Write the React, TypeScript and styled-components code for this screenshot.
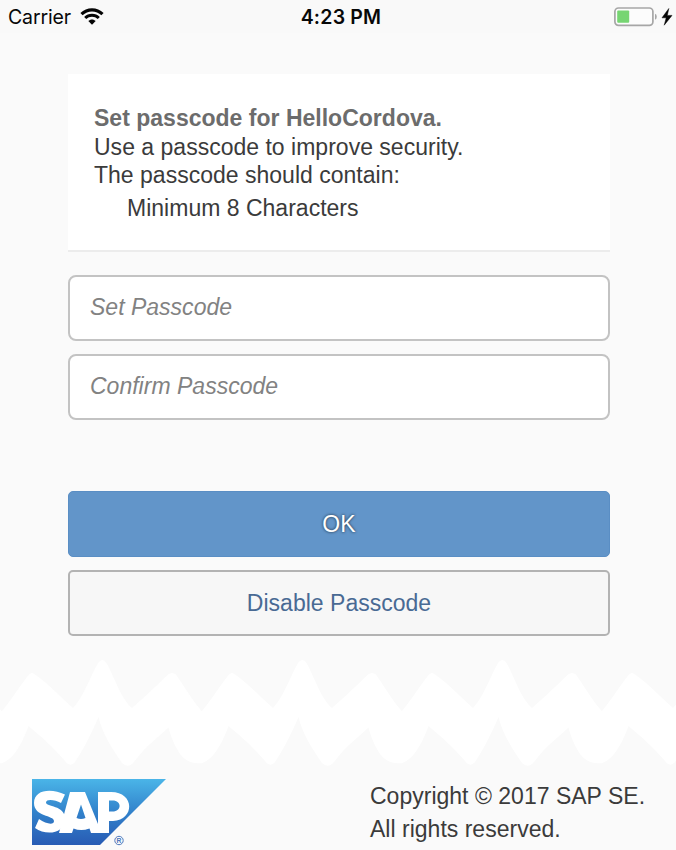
import React from "react";
import styled, { createGlobalStyle, css } from "styled-components";

const GlobalStyle = createGlobalStyle`
  * { box-sizing: border-box; }
  body { margin: 0; background: #fafafa; overflow: hidden; }
`;

const Screen = styled.div`
  width: 676px;
  height: 850px;
  overflow: hidden;
  display: flex;
  flex-direction: column;
  background: #fafafa;
  color: #3b3b3b;
  font-family: "Liberation Sans", Arial, sans-serif;
  font-size: 23px;
  letter-spacing: 0.01px;
`;

const StatusBar = styled.header`
  display: grid;
  grid-template-columns: 1fr auto 1fr;
  align-items: center;
  height: 33px;
  padding: 1px 2px 0 8px;
  background: #f9f9f9;
  color: #080808;
  font-family: Inter, sans-serif;
  font-size: 19.5px;
  letter-spacing: 0;
`;

const Carrier = styled.div`
  display: flex;
  align-items: center;
  gap: 9px;
  letter-spacing: -0.12px;
`;

const Clock = styled.time`
  font-weight: 600;
  letter-spacing: 0.2px;
`;

const Power = styled.div`
  display: flex;
  justify-content: flex-end;
`;

const Content = styled.main`
  width: 542px;
  margin: 41px 0 0 68px;
  display: flex;
  flex-direction: column;
`;

const Card = styled.section`
  height: 178px;
  padding: 30px 26px 0;
  background: #fff;
  border-bottom: 2px solid #ececec;
  line-height: 28px;
`;

const Title = styled.h1`
  margin: 0;
  font-size: 23px;
  line-height: 29px;
  font-weight: 700;
  color: #6c6c6c;
`;

const Line = styled.p`
  margin: 0;
`;

const Rules = styled.ul`
  margin: 5px 0 0;
  padding: 0 0 0 33px;
  list-style: none;
`;

const Fields = styled.form`
  display: flex;
  flex-direction: column;
  gap: 13px;
  margin-top: 23px;
`;

const Field = styled.input`
  height: 66px;
  width: 100%;
  padding: 0 20px 2px;
  border: 2px solid #c3c3c3;
  border-radius: 8px;
  background: #fff;
  font: inherit;
  font-style: italic;
  letter-spacing: inherit;
  outline: none;
  &::placeholder {
    color: #828282;
    opacity: 1;
  }
`;

const Actions = styled.div`
  display: flex;
  flex-direction: column;
  gap: 13px;
  margin-top: 71px;
`;

const Button = styled.button<{ $primary?: boolean }>`
  height: 66px;
  width: 100%;
  padding: 1px 0 0;
  border-radius: 5px;
  font: inherit;
  letter-spacing: inherit;
  ${({ $primary }) =>
    $primary
      ? css`
          border: 1px solid #5a8ec4;
          background: #6295c9;
          color: #fff;
          text-shadow: 0 0 3px rgba(0, 0, 0, 0.75);
        `
      : css`
          border: 2px solid #b3b3b3;
          background: #f7f7f7;
          color: #496a94;
        `}
`;

const Tear = styled.svg`
  display: block;
  flex: none;
  width: 676px;
  height: 110px;
  margin-top: 23px;
`;

const Footer = styled.footer`
  display: flex;
  justify-content: space-between;
  align-items: flex-start;
  padding: 10px 30px 0 32px;
`;

const Copyright = styled.div`
  width: 276px;
  padding-top: 1px;
  line-height: 33px;
  white-space: nowrap;
`;

const Logo = styled.svg`
  display: block;
  width: 134px;
  height: 70px;
`;

const WifiIcon = () => (
  <svg width="24" height="18" viewBox="0 0 24 18" fill="none" stroke="#050505">
    <path d="M1.5 6.2C7.4.5 16.6.5 22.5 6.2" strokeWidth="3.2" />
    <path d="M5.2 10C9 6.3 15 6.3 18.8 10" strokeWidth="3" />
    <path d="M8.3 13.1C10.4 11 13.6 11 15.7 13.1L12 16.8Z" fill="#050505" stroke="none" />
  </svg>
);

const BatteryIcon = () => (
  <svg width="60" height="22" viewBox="0 0 60 22">
    <rect x="0.9" y="2" width="38" height="17.4" rx="3.6" fill="#fcfcfc" stroke="#a6a6a6" strokeWidth="1.7" />
    <rect x="3.2" y="4.5" width="12" height="12.2" rx="1" fill="#76d572" />
    <path d="M41 7.8Q42.8 8.5 42.8 10.8T41 13.8Z" fill="#a6a6a6" />
    <path d="M54.8 2.5L48 11.8h4.2L50.200 19.2 58 9.400H53.300Z" fill="#050505" stroke="#050505" strokeWidth=".5" />
  </svg>
);

/* One 200px unit of the torn strip, repeated across the page width. */
const TearUnit = () => (
  <path
    fill="#fff"
    d="M2 52C10 43 21 25 29 15.500Q32 12.500 35 15.500C50 26 60 38 73 49C84 37 90 18 98 4Q102.500 -2 106.500 4C114 17 121 40 132 49C146 37 156 27 168 15.500Q172 12.500 176 15.500C184 27 192 41 202 52.500L203 52V104Q188 106 180 95C176 89 171 79 168.500 68.500C155 81 146 87 134 103Q128 110 122 104C113 91 102 74 98.500 58C93 71 84 90 75 103Q70 109 65 102C53 88 44 80 28.500 67C24 80 14 101 2 104Z"
  />
);

const SapLogo = () => (
  <Logo viewBox="0 0 134 70">
    <defs>
      <linearGradient id="sapBlue" x1="0" y1="0" x2="0" y2="1">
        <stop offset="0" stopColor="#4ab5e8" />
        <stop offset="0.5" stopColor="#3282cb" />
        <stop offset="1" stopColor="#285bb4" />
      </linearGradient>
    </defs>
    <path d="M0 0H134L68 66H0Z" fill="url(#sapBlue)" />
    <g fill="#fff">
      <path d="M33 15.500L29 24C23 20.500 14 19.500 14 23.500C14 28 33 26 33 39.500C33 55 14 57 3 49L7 40C14 45 22 46.500 22 42C22 36 2 38 2 24C2 10 20 9 33 15.500Z" />
      <path fillRule="evenodd" d="M38 13H53L66 45V13H79C103 13 103 41 81 42H77V54H59L57.500 49.500Q49 52.500 41.500 49.500L40 54H27ZM49 25.500L44.500 39Q49 41 53.500 39ZM77 21.500V32.500H80.500C90 32.500 90 21.500 80.500 21.500Z" />
    </g>
    <circle cx="87" cy="61.500" r="4.200" fill="none" stroke="#4e78bd" strokeWidth="1" />
    <text x="87" y="64" textAnchor="middle" fontSize="6.800" fontWeight="700" letterSpacing="0" fill="#4e78bd">R</text>
  </Logo>
);

export default function App() {
  return (
    <>
      <GlobalStyle />
      <Screen>
        <StatusBar>
          <Carrier>
            Carrier
            <WifiIcon />
          </Carrier>
          <Clock>4:23 PM</Clock>
          <Power>
            <BatteryIcon />
          </Power>
        </StatusBar>
        <Content>
          <Card>
            <Title>Set passcode for HelloCordova.</Title>
            <Line>Use a passcode to improve security.</Line>
            <Line>The passcode should contain:</Line>
            <Rules>
              <li>Minimum 8 Characters</li>
            </Rules>
          </Card>
          <Fields>
            <Field type="password" placeholder="Set Passcode" />
            <Field type="password" placeholder="Confirm Passcode" />
          </Fields>
          <Actions>
            <Button $primary>OK</Button>
            <Button>Disable Passcode</Button>
          </Actions>
        </Content>
        <Tear viewBox="0 0 676 110">
          {[-200, 0, 200, 400, 600].map((x) => (
            <g key={x} transform={`translate(${x} 0)`}>
              <TearUnit />
            </g>
          ))}
        </Tear>
        <Footer>
          <SapLogo />
          <Copyright>
            Copyright © 2017 SAP SE.
            <br />
            All rights reserved.
          </Copyright>
        </Footer>
      </Screen>
    </>
  );
}
